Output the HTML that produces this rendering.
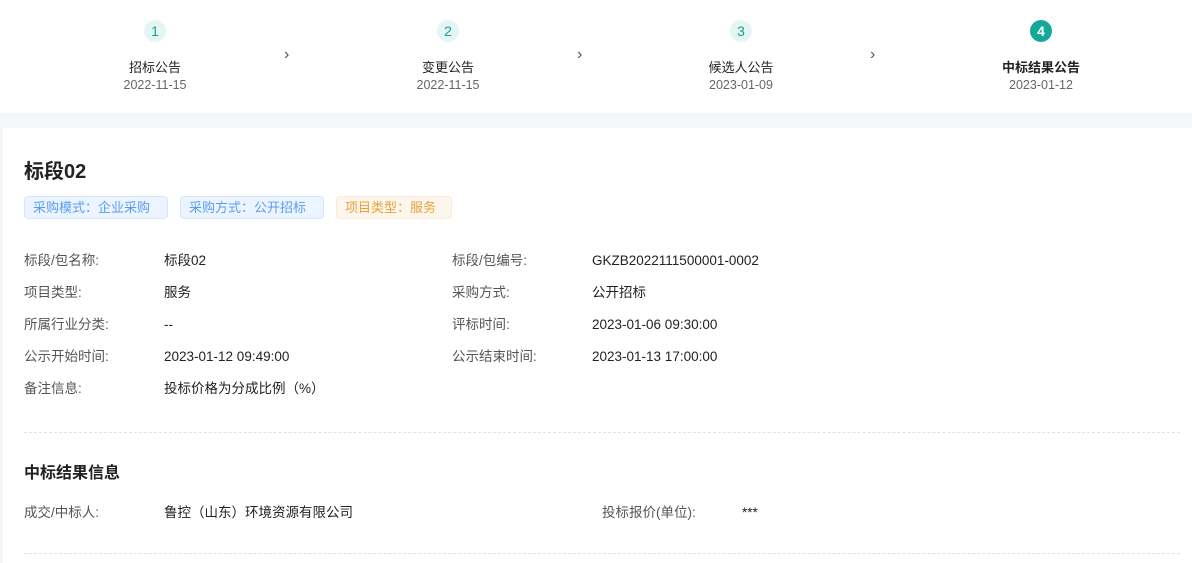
<!DOCTYPE html><html><head><meta charset="utf-8"><style>
body{margin:0;width:1192px;height:563px;overflow:hidden;background:#fff;font-family:"Liberation Sans","Noto Sans CJK SC",sans-serif;position:relative}
.a{position:absolute;white-space:nowrap}
.c{width:22px;height:22px;border-radius:50%;background:#e3f6f3;color:#1a9e90;font-size:14px;line-height:22px;text-align:center}
.st{font-size:13px;color:#222;transform:translateX(-50%);text-align:center}
.dt{font-size:12.5px;color:#666;transform:translateX(-50%)}
.ar{font-size:16px;color:#555}
.l{font-size:13.5px;color:#555;line-height:20px}
.v{font-size:13.5px;color:#222;line-height:20px}
.tag{height:23px;line-height:21px;border-radius:4px;font-size:13px;padding:0 8px;box-sizing:border-box}
.dash{position:absolute;left:24px;width:1156px;border-top:1px dashed #e2e2e2}
</style></head><body>
<div class="a" style="left:0;top:113px;width:1192px;height:15px;background:#f5f6f8"></div>
<div class="a" style="left:0;top:128px;width:3px;height:435px;background:#f5f6f8"></div>

<div class="a c" style="left:144px;top:20px">1</div>
<div class="a c" style="left:437px;top:20px">2</div>
<div class="a c" style="left:730px;top:20px">3</div>
<div class="a c" style="left:1030px;top:20px;background:#13a89a;color:#fff;font-weight:bold">4</div>
<div class="a st" style="left:155px;top:57px">招标公告</div>
<div class="a st" style="left:448px;top:57px">变更公告</div>
<div class="a st" style="left:741px;top:57px">候选人公告</div>
<div class="a st" style="left:1041px;top:57px;font-weight:bold">中标结果公告</div>
<div class="a dt" style="left:155px;top:78px">2022-11-15</div>
<div class="a dt" style="left:448px;top:78px">2022-11-15</div>
<div class="a dt" style="left:741px;top:78px">2023-01-09</div>
<div class="a dt" style="left:1041px;top:78px">2023-01-12</div>
<div class="a ar" style="left:284px;top:46px">›</div>
<div class="a ar" style="left:577px;top:46px">›</div>
<div class="a ar" style="left:870px;top:46px">›</div>

<div class="a" style="left:24px;top:155px;font-size:20px;font-weight:bold;color:#222">标段02</div>
<div class="a tag" style="left:24px;top:196px;width:144px;background:#ecf5ff;border:1px solid #d4e8fd;color:#5b9cf0">采购模式：企业采购</div>
<div class="a tag" style="left:180px;top:196px;width:144px;background:#ecf5ff;border:1px solid #d4e8fd;color:#5b9cf0">采购方式：公开招标</div>
<div class="a tag" style="left:336px;top:196px;width:116px;background:#fdf6ec;border:1px solid #faecd8;color:#e6a23c">项目类型：服务</div>

<div class="a l" style="left:24px;top:251px">标段/包名称:</div><div class="a v" style="left:164px;top:251px">标段02</div>
<div class="a l" style="left:452px;top:251px">标段/包编号:</div><div class="a v" style="left:592px;top:251px">GKZB2022111500001-0002</div>
<div class="a l" style="left:24px;top:283px">项目类型:</div><div class="a v" style="left:164px;top:283px">服务</div>
<div class="a l" style="left:452px;top:283px">采购方式:</div><div class="a v" style="left:592px;top:283px">公开招标</div>
<div class="a l" style="left:24px;top:315px">所属行业分类:</div><div class="a v" style="left:164px;top:315px">--</div>
<div class="a l" style="left:452px;top:315px">评标时间:</div><div class="a v" style="left:592px;top:315px">2023-01-06 09:30:00</div>
<div class="a l" style="left:24px;top:347px">公示开始时间:</div><div class="a v" style="left:164px;top:347px">2023-01-12 09:49:00</div>
<div class="a l" style="left:452px;top:347px">公示结束时间:</div><div class="a v" style="left:592px;top:347px">2023-01-13 17:00:00</div>
<div class="a l" style="left:24px;top:379px">备注信息:</div><div class="a v" style="left:164px;top:379px">投标价格为分成比例（%）</div>

<div class="dash" style="top:432px"></div>
<div class="a" style="left:24px;top:459px;font-size:16px;font-weight:bold;color:#222">中标结果信息</div>
<div class="a l" style="left:24px;top:503px">成交/中标人:</div><div class="a v" style="left:164px;top:503px">鲁控（山东）环境资源有限公司</div>
<div class="a l" style="left:602px;top:503px">投标报价(单位):</div><div class="a v" style="left:742px;top:503px">***</div>
<div class="dash" style="top:553px"></div>
</body></html>
